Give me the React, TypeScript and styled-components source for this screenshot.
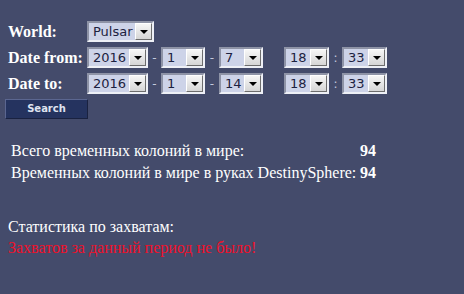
import React from "react";
import styled, { createGlobalStyle } from "styled-components";

const Global = createGlobalStyle`
  html, body { margin: 0; padding: 0; background: #444b6b; }
  body { font-family: "Liberation Serif", "DejaVu Serif", serif; color: #ffffff; }
`;

const Page = styled.div`
  width: 464px;
  height: 294px;
  background: #444b6b;
  padding-top: 21px;
  box-sizing: border-box;
  overflow: hidden;
  font-family: "Liberation Serif", "DejaVu Serif", serif;
  color: #ffffff;
`;

const Form = styled.div`
  display: flex;
  flex-direction: column;
  gap: 5px;
`;

const Row = styled.div`
  display: flex;
  align-items: center;
  height: 21px;
`;

const Label = styled.div`
  width: 79px;
  padding-left: 8px;
  font-weight: bold;
  font-size: 16px;
  line-height: 21px;
  white-space: nowrap;
`;

const SelectBox = styled.div<{ $w: number }>`
  width: ${(p) => p.$w}px;
  height: 21px;
  box-sizing: border-box;
  display: flex;
  align-items: stretch;
  background: #cdd3e8;
  border-top: 2px solid #8e93a6;
  border-left: 2px solid #8e93a6;
  border-bottom: 2px solid #eef0f6;
  border-right: 2px solid #eef0f6;
`;

const Value = styled.div`
  flex: 1;
  font-family: "DejaVu Sans", Verdana, sans-serif;
  font-size: 13px;
  line-height: 17px;
  color: #1c2240;
  padding-left: 4px;
  white-space: nowrap;
  overflow: hidden;
`;

const Arrow = styled.div`
  width: 17px;
  box-sizing: border-box;
  background: linear-gradient(#f6f6f6, #d6d6d6);
  border: 1px solid #ffffff;
  border-right-color: #6d6d6d;
  border-bottom-color: #6d6d6d;
  display: flex;
  align-items: center;
  justify-content: center;
  &::after {
    content: "";
    border-left: 4px solid transparent;
    border-right: 4px solid transparent;
    border-top: 4px solid #000;
    margin-top: 1px;
  }
`;

const Sep = styled.div<{ $w: number }>`
  width: ${(p) => p.$w}px;
  text-align: center;
  font-family: "DejaVu Sans", Verdana, sans-serif;
  font-size: 12px;
  color: #c3c9de;
`;

const Gap = styled.div<{ $w: number }>`
  width: ${(p) => p.$w}px;
`;

const ButtonRow = styled.div`
  padding: 4px 0 0 5px;
`;

const SearchButton = styled.button`
  width: 83px;
  height: 20px;
  box-sizing: border-box;
  background: #25335f;
  border: 1px solid #5b6690;
  border-right-color: #1a2240;
  border-bottom-color: #1a2240;
  color: #dfe3f0;
  font-family: "DejaVu Sans", Verdana, sans-serif;
  font-weight: bold;
  font-size: 10px;
  padding: 0;
  cursor: pointer;
`;

const Stats = styled.div`
  margin-top: 21px;
  padding-left: 11px;
  display: grid;
  grid-template-columns: 349px auto;
  row-gap: 1px;
  font-family: "Liberation Serif", "DejaVu Serif", serif;
  font-size: 16px;
  line-height: 21px;
`;

const Num = styled.div`
  font-weight: bold;
`;

const Section = styled.div`
  margin-top: 33px;
  padding-left: 8px;
  font-family: "Liberation Serif", "DejaVu Serif", serif;
  font-size: 16px;
  line-height: 21px;
`;

const Warn = styled.div`
  color: #f0102a;
`;

function Select({ w, v }: { w: number; v: string }) {
  return (
    <SelectBox $w={w}>
      <Value>{v}</Value>
      <Arrow />
    </SelectBox>
  );
}

function DateRow({ label, day }: { label: string; day: string }) {
  return (
    <Row>
      <Label>{label}</Label>
      <Select w={61} v="2016" />
      <Sep $w={13}>-</Sep>
      <Select w={44} v="1" />
      <Sep $w={14}>-</Sep>
      <Select w={44} v={day} />
      <Gap $w={21} />
      <Select w={45} v="18" />
      <Sep $w={13}>:</Sep>
      <Select w={45} v="33" />
    </Row>
  );
}

export default function App() {
  return (
    <Page>
      <Global />
      <Form>
        <Row>
          <Label>World:</Label>
          <Select w={67} v="Pulsar" />
        </Row>
        <DateRow label="Date from:" day="7" />
        <DateRow label="Date to:" day="14" />
      </Form>
      <ButtonRow>
        <SearchButton>Search</SearchButton>
      </ButtonRow>
      <Stats>
        <div>Всего временных колоний в мире:</div>
        <Num>94</Num>
        <div>Временных колоний в мире в руках DestinySphere:</div>
        <Num>94</Num>
      </Stats>
      <Section>
        <div>Статистика по захватам:</div>
        <Warn>Захватов за данный период не было!</Warn>
      </Section>
    </Page>
  );
}
